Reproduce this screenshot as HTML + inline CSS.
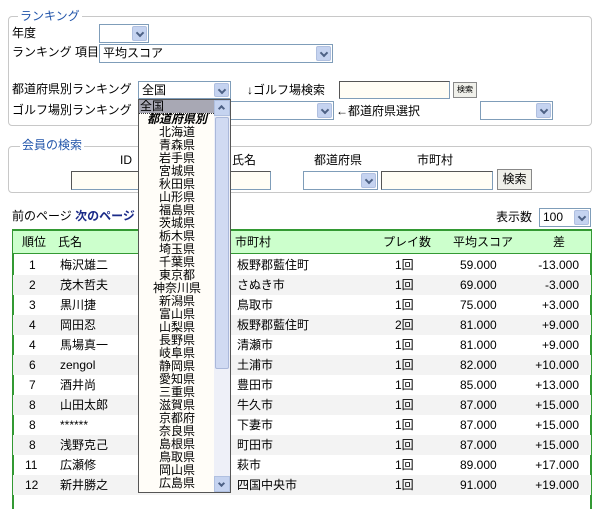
<!DOCTYPE html>
<html><head><meta charset="utf-8"><style>
*{box-sizing:border-box;margin:0;padding:0}
body{width:600px;height:495px;overflow:hidden;background:#fff;font-family:"Liberation Sans","Noto Sans CJK JP",sans-serif;font-size:12px;color:#000;position:relative}
.a{position:absolute;white-space:nowrap;line-height:14px}
.fs{position:absolute;border:1px solid #c8c8c8;border-radius:4px}
.lg{position:absolute;background:#fff;color:#2255aa;padding:0 2px;line-height:14px}
.sel{position:absolute;border:1px solid #7f9db9;background:#fff;padding-left:3px;line-height:16px}
.sel .b{position:absolute;right:1px;top:1px;bottom:1px;width:15px;background:#c5d3f0;border:1px solid #b0c0e0;border-radius:2px}
.sel .b:after{content:"";position:absolute;left:4px;top:3px;width:4px;height:4px;border-right:2px solid #4d6185;border-bottom:2px solid #4d6185;transform:rotate(45deg)}
.inp{position:absolute;border:1px solid #7f9db9;border-top-color:#555;border-left-color:#555;background:#fffdf5}
.btn{position:absolute;border:1px solid #888;background:#f0f0ea;text-align:center;line-height:18px}
.tr{position:absolute;left:13px;width:578px;height:20px;line-height:20px}
.tr span{position:absolute;white-space:nowrap}
.g{background:#f3f3f3}
.li{position:absolute;left:0;top:0;width:76px;height:394px}
.li div{position:absolute;left:0;width:76px;height:13px;line-height:13px;font-size:12px;text-align:center;white-space:nowrap}
</style></head><body>
<div class="fs" style="left:8px;top:16px;width:584px;height:110px"></div>
<div class="lg" style="left:18px;top:9px">ランキング</div>
<div class="a" style="left:12px;top:26px">年度</div>
<div class="sel" style="left:99px;top:24px;width:50px;height:19px"><div class="b"></div></div>
<div class="a" style="left:12px;top:45px">ランキング 項目</div>
<div class="sel" style="left:99px;top:44px;width:234px;height:19px">平均スコア<div class="b"></div></div>
<div class="a" style="left:12px;top:82px">都道府県別ランキング</div>
<div class="sel" style="left:138px;top:81px;width:93px;height:18px">全国<div class="b"></div></div>
<div class="a" style="left:247px;top:83px">↓ゴルフ場検索</div>
<div class="inp" style="left:339px;top:81px;width:111px;height:18px"></div>
<div class="btn" style="left:453px;top:82px;width:24px;height:16px;font-size:8px;line-height:14px">検索</div>
<div class="a" style="left:12px;top:103px">ゴルフ場別ランキング</div>
<div class="sel" style="left:138px;top:101px;width:196px;height:19px"><div class="b"></div></div>
<div class="a" style="left:336px;top:104px">←都道府県選択</div>
<div class="sel" style="left:480px;top:101px;width:73px;height:19px"><div class="b"></div></div>

<div class="fs" style="left:8px;top:146px;width:584px;height:47px"></div>
<div class="lg" style="left:20px;top:138px">会員の検索</div>
<div class="a" style="left:120px;top:153px">ID</div>
<div class="a" style="left:232px;top:153px">氏名</div>
<div class="a" style="left:314px;top:153px">都道府県</div>
<div class="a" style="left:417px;top:153px">市町村</div>
<div class="inp" style="left:71px;top:171px;width:200px;height:19px"></div>
<div class="sel" style="left:303px;top:171px;width:75px;height:19px"><div class="b"></div></div>
<div class="inp" style="left:381px;top:171px;width:112px;height:19px"></div>
<div class="btn" style="left:497px;top:169px;width:35px;height:21px">検索</div>

<div class="a" style="left:12px;top:209px">前のページ <b style="color:#1a2a88">次のページ</b></div>
<div class="a" style="left:496px;top:210px">表示数</div>
<div class="sel" style="left:539px;top:208px;width:52px;height:19px">100<div class="b"></div></div>

<div style="position:absolute;left:12px;top:229px;width:580px;height:280px;border:2px solid #339933;border-bottom:none"></div>
<div class="tr" style="top:231px;height:23px;line-height:23px;background:#ccffcc;border-bottom:1px solid #339933"><span style="left:9px">順位</span><span style="left:45px">氏名</span><span style="left:222px">市町村</span><span style="left:370px">プレイ数</span><span style="left:440px">平均スコア</span><span style="left:540px">差</span></div>
<div class="tr" style="top:255px"><span style="left:16px">1</span><span style="left:47px">梅沢雄二</span><span style="left:224px">板野郡藍住町</span><span style="left:382px">1回</span><span style="left:447px">59.000</span><span style="right:12px">-13.000</span></div>
<div class="tr g" style="top:275px"><span style="left:16px">2</span><span style="left:47px">茂木哲夫</span><span style="left:224px">さぬき市</span><span style="left:382px">1回</span><span style="left:447px">69.000</span><span style="right:12px">-3.000</span></div>
<div class="tr" style="top:295px"><span style="left:16px">3</span><span style="left:47px">黒川捷</span><span style="left:224px">鳥取市</span><span style="left:382px">1回</span><span style="left:447px">75.000</span><span style="right:12px">+3.000</span></div>
<div class="tr g" style="top:315px"><span style="left:16px">4</span><span style="left:47px">岡田忍</span><span style="left:224px">板野郡藍住町</span><span style="left:382px">2回</span><span style="left:447px">81.000</span><span style="right:12px">+9.000</span></div>
<div class="tr" style="top:335px"><span style="left:16px">4</span><span style="left:47px">馬場真一</span><span style="left:224px">清瀬市</span><span style="left:382px">1回</span><span style="left:447px">81.000</span><span style="right:12px">+9.000</span></div>
<div class="tr g" style="top:355px"><span style="left:16px">6</span><span style="left:47px">zengol</span><span style="left:224px">土浦市</span><span style="left:382px">1回</span><span style="left:447px">82.000</span><span style="right:12px">+10.000</span></div>
<div class="tr" style="top:375px"><span style="left:16px">7</span><span style="left:47px">酒井尚</span><span style="left:224px">豊田市</span><span style="left:382px">1回</span><span style="left:447px">85.000</span><span style="right:12px">+13.000</span></div>
<div class="tr g" style="top:395px"><span style="left:16px">8</span><span style="left:47px">山田太郎</span><span style="left:224px">牛久市</span><span style="left:382px">1回</span><span style="left:447px">87.000</span><span style="right:12px">+15.000</span></div>
<div class="tr" style="top:415px"><span style="left:16px">8</span><span style="left:47px">******</span><span style="left:224px">下妻市</span><span style="left:382px">1回</span><span style="left:447px">87.000</span><span style="right:12px">+15.000</span></div>
<div class="tr g" style="top:435px"><span style="left:16px">8</span><span style="left:47px">浅野克己</span><span style="left:224px">町田市</span><span style="left:382px">1回</span><span style="left:447px">87.000</span><span style="right:12px">+15.000</span></div>
<div class="tr" style="top:455px"><span style="left:12px">11</span><span style="left:47px">広瀬修</span><span style="left:224px">萩市</span><span style="left:382px">1回</span><span style="left:447px">89.000</span><span style="right:12px">+17.000</span></div>
<div class="tr g" style="top:475px"><span style="left:12px">12</span><span style="left:47px">新井勝之</span><span style="left:224px">四国中央市</span><span style="left:382px">1回</span><span style="left:447px">91.000</span><span style="right:12px">+19.000</span></div>

<div style="position:absolute;left:138px;top:99px;width:93px;height:394px;border:1px solid #555;background:#fffdf8;overflow:hidden">
<div class="li">
<div style="top:0px;text-align:left;background:#a8a8b4;outline:1px dotted #333;padding-left:1px">全国</div>
<div style="top:13px;font-weight:bold;font-style:italic">都道府県別</div>
<div style="top:26px">北海道</div><div style="top:39px">青森県</div><div style="top:52px">岩手県</div><div style="top:65px">宮城県</div><div style="top:78px">秋田県</div><div style="top:91px">山形県</div><div style="top:104px">福島県</div><div style="top:117px">茨城県</div><div style="top:130px">栃木県</div><div style="top:143px">埼玉県</div><div style="top:156px">千葉県</div><div style="top:169px">東京都</div><div style="top:182px">神奈川県</div><div style="top:195px">新潟県</div><div style="top:208px">富山県</div><div style="top:221px">山梨県</div><div style="top:234px">長野県</div><div style="top:247px">岐阜県</div><div style="top:260px">静岡県</div><div style="top:273px">愛知県</div><div style="top:286px">三重県</div><div style="top:299px">滋賀県</div><div style="top:312px">京都府</div><div style="top:325px">奈良県</div><div style="top:338px">島根県</div><div style="top:351px">鳥取県</div><div style="top:364px">岡山県</div><div style="top:377px">広島県</div>
</div>
<div style="position:absolute;right:0;top:0;width:16px;height:100%;background:#eef0f8">
<div style="position:absolute;left:0;top:0;width:16px;height:16px;background:#c5d3f0;border:1px solid #b0c0e0"></div>
<div style="position:absolute;left:5px;top:6px;width:5px;height:5px;border-left:2px solid #4d6185;border-top:2px solid #4d6185;transform:rotate(45deg)"></div>
<div style="position:absolute;left:1px;top:17px;width:14px;height:252px;background:#d0daf2;border:1px solid #aab8da;border-radius:2px"></div>
<div style="position:absolute;left:0;bottom:0;width:16px;height:16px;background:#c5d3f0;border:1px solid #b0c0e0"></div>
<div style="position:absolute;left:5px;bottom:6px;width:5px;height:5px;border-right:2px solid #4d6185;border-bottom:2px solid #4d6185;transform:rotate(45deg)"></div>
</div>
</div>
</body></html>
